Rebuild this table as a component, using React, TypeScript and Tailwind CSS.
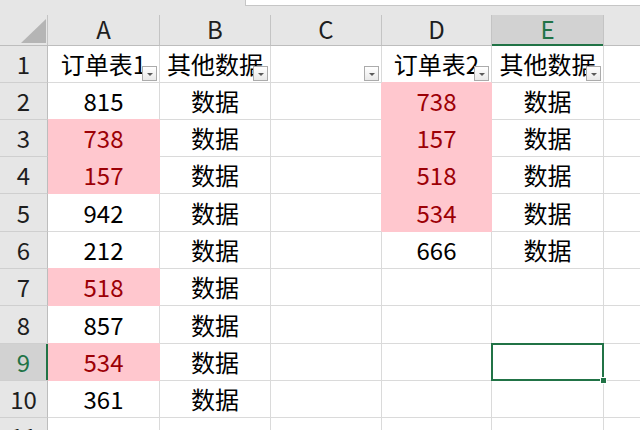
import React from "react";

type Cell = { text?: string; pink?: boolean; filter?: boolean };

const FONT = "font-['Noto_Sans_CJK_SC','Noto_Sans',sans-serif]";

const cols = [
  { label: "A", w: "w-[112px]" },
  { label: "B", w: "w-[111px]" },
  { label: "C", w: "w-[111px]" },
  { label: "D", w: "w-[110px]" },
  { label: "E", w: "w-[112px]" },
];

const heights = [
  "h-[37px]",
  "h-[37px]",
  "h-[37px]",
  "h-[37px]",
  "h-[38px]",
  "h-[37px]",
  "h-[37px]",
  "h-[38px]",
  "h-[37px]",
  "h-[37px]",
  "h-[37px]",
];

const D = "数据";
const data: Cell[][] = [
  [
    { text: "订单表1", filter: true },
    { text: "其他数据", filter: true },
    { filter: true },
    { text: "订单表2", filter: true },
    { text: "其他数据", filter: true },
  ],
  [{ text: "815" }, { text: D }, {}, { text: "738", pink: true }, { text: D }],
  [{ text: "738", pink: true }, { text: D }, {}, { text: "157", pink: true }, { text: D }],
  [{ text: "157", pink: true }, { text: D }, {}, { text: "518", pink: true }, { text: D }],
  [{ text: "942" }, { text: D }, {}, { text: "534", pink: true }, { text: D }],
  [{ text: "212" }, { text: D }, {}, { text: "666" }, { text: D }],
  [{ text: "518", pink: true }, { text: D }, {}, {}, {}],
  [{ text: "857" }, { text: D }, {}, {}, {}],
  [{ text: "534", pink: true }, { text: D }, {}, {}, {}],
  [{ text: "361" }, { text: D }, {}, {}, {}],
  [{}, {}, {}, {}, {}],
];

function FilterButton() {
  return (
    <div className="absolute right-[2px] bottom-[1px] w-[15px] h-[15px] border border-[#ababab] bg-linear-to-b from-white to-[#e9e9e9] flex items-end justify-center pb-[4px] z-10">
      <div className="w-0 h-0 border-l-[3px] border-r-[3px] border-t-[3px] border-l-transparent border-r-transparent border-t-[#5a5a5a]" />
    </div>
  );
}

export default function App() {
  const isPink = (r: number, c: number) => !!data[r]?.[c]?.pink;
  return (
    <div className={`w-[640px] h-[430px] overflow-hidden bg-white relative ${FONT}`}>
      {/* top strip with formula bar edge */}
      <div className="h-[15px] bg-[#e6e6e6] flex">
        <div className="w-[245px] shrink-0" />
        <div className="flex-1 h-[6px] bg-white border-l border-b border-[#c6c6c6]" />
      </div>

      {/* column headers */}
      <div className="flex h-[31px] bg-[#e6e6e6] border-b border-[#bdbdbd]">
        <div className="w-[48px] shrink-0 border-r border-[#c4c4c4] relative">
          <svg className="absolute left-[21px] top-[4px]" width="25" height="24" viewBox="0 0 25 24">
            <polygon points="0,24 25,24 25,0" fill="#b5b5b5" />
          </svg>
        </div>
        {cols.map((c) => {
          const sel = c.label === "E";
          return (
            <div
              key={c.label}
              className={`${c.w} shrink-0 border-r border-[#c4c4c4] relative flex items-center justify-center text-[24px] leading-none ${
                sel ? "bg-[#d2d2d2] text-[#217346]" : "text-[#1e1e1e]"
              }`}
            >
              <span className="-mt-[2px]">{c.label}</span>
              {sel && <div className="absolute left-0 right-0 -bottom-px h-[2px] bg-[#217346]" />}
            </div>
          );
        })}
        <div className="flex-1" />
      </div>

      {/* rows */}
      {data.map((row, r) => {
        const selRow = r === 8;
        return (
          <div key={r} className={`flex ${heights[r]}`}>
            <div
              className={`w-[48px] shrink-0 border-r border-b border-r-[#bdbdbd] border-b-[#cfcfcf] relative flex items-center justify-center text-[24px] leading-none ${
                selRow ? "bg-[#d2d2d2] text-[#217346]" : "bg-[#e6e6e6] text-[#1e1e1e]"
              }`}
            >
              <span>{r + 1}</span>
              {selRow && <div className="absolute -right-px top-0 bottom-0 w-[2px] bg-[#217346]" />}
            </div>
            {row.map((cell, c) => {
              const pink = cell.pink;
              const bottomPink = pink || isPink(r + 1, c);
              const rightPink = pink || isPink(r, c + 1);
              const selected = r === 8 && c === 4;
              return (
                <div
                  key={c}
                  className={`${cols[c].w} shrink-0 border-r border-b relative flex items-center justify-center text-[24px] leading-none ${
                    bottomPink ? "border-b-[#ffc7ce]" : "border-b-[#dadada]"
                  } ${rightPink ? "border-r-[#ffc7ce]" : "border-r-[#dadada]"} ${
                    pink ? "bg-[#ffc7ce] text-[#9c0006]" : "text-black"
                  } ${selected ? "" : "overflow-hidden"}`}
                >
                  {cell.text && <span className="whitespace-nowrap">{cell.text}</span>}
                  {cell.filter && <FilterButton />}
                  {selected && (
                    <>
                      <div className="absolute -left-px -top-px -right-px -bottom-px border-2 border-[#217346] z-10" />
                      <div className="absolute -right-[4px] -bottom-[4px] w-[7px] h-[7px] bg-[#217346] border border-white z-20" />
                    </>
                  )}
                </div>
              );
            })}
            <div className="flex-1 border-b border-[#dadada]" />
          </div>
        );
      })}
    </div>
  );
}
